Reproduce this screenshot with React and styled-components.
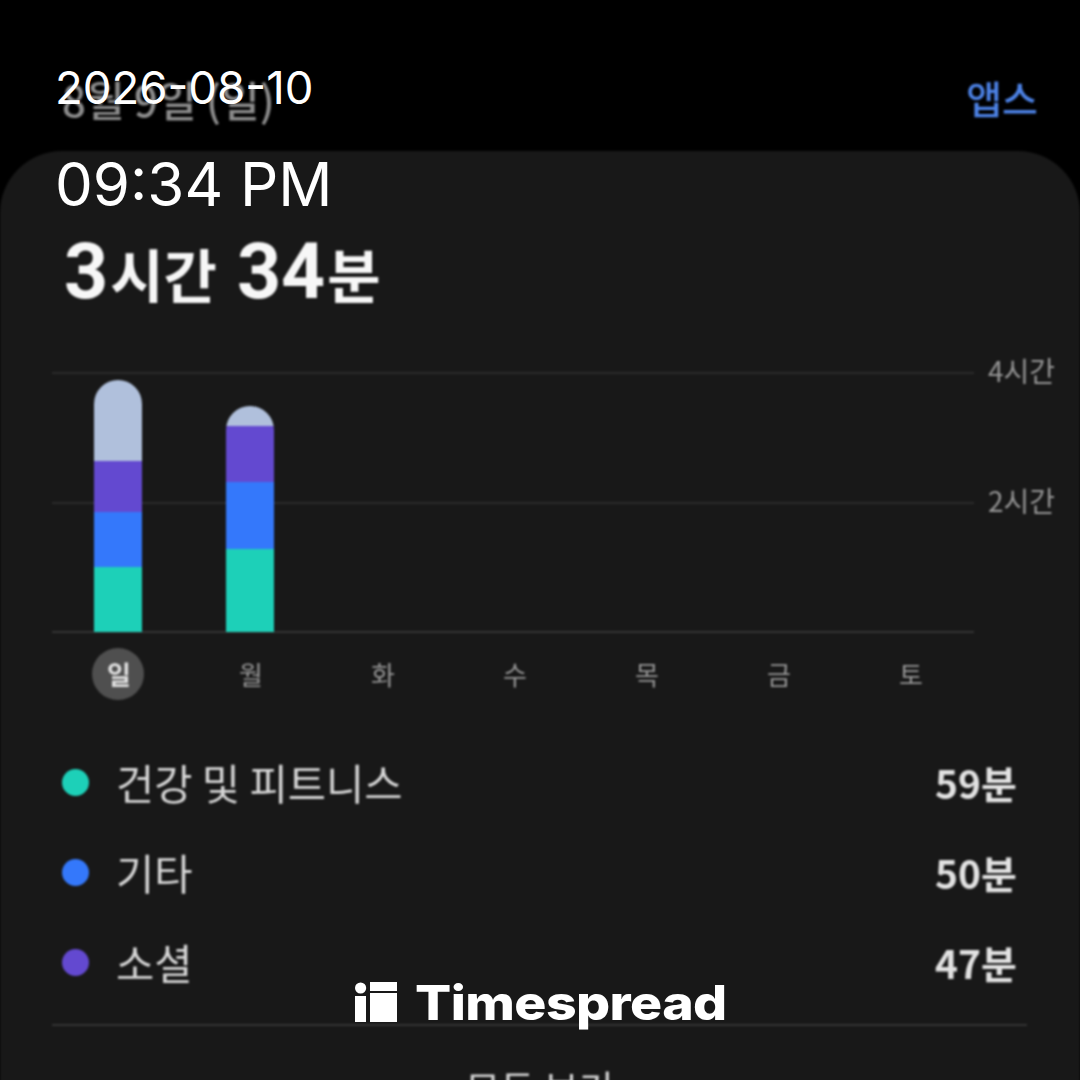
import styled, { createGlobalStyle } from 'styled-components';

const GlobalStyle = createGlobalStyle`
  html, body {
    margin: 0;
    padding: 0;
    background: #000000;
  }
`;

const KOREAN = `"Noto Sans CJK KR", "Noto Sans", sans-serif`;
const LATIN = `Inter, "Liberation Sans", sans-serif`;

const Page = styled.div`
  position: relative;
  width: 1080px;
  height: 1080px;
  overflow: hidden;
  background: #000000;
  font-family: ${KOREAN};
`;

const Screen = styled.div`
  height: 100%;
  display: flex;
  flex-direction: column;
  filter: blur(0.8px);
`;

const Header = styled.header`
  height: 151px;
  flex: none;
  display: flex;
  justify-content: space-between;
  align-items: flex-start;
  padding: 0 42px 0 62px;
  box-sizing: border-box;
`;

const DateTitle = styled.h1`
  margin: 71px 0 0;
  font-size: 42px;
  line-height: 56px;
  font-weight: 500;
  color: #8c8c8c;
`;

const AppsLink = styled.a`
  margin-top: 69px;
  font-size: 39px;
  line-height: 56px;
  font-weight: 500;
  color: #4c82e6;
`;

const Card = styled.section`
  flex: 1;
  background: #181818;
  border-radius: 62px 62px 0 0;
  padding: 83px 52px 0;
`;

const Total = styled.div`
  height: 76px;
  margin-left: 12px;
  display: flex;
  align-items: baseline;
  color: #f7f7f7;
  font-weight: 700;
  font-size: 58px;
  line-height: 76px;
`;

const TotalNumber = styled.span`
  font-family: Roboto, sans-serif;
  font-size: 77px;
  margin-left: ${(props) => props.$before || 0}px;
  margin-right: 2px;
`;

const Chart = styled.div`
  display: grid;
  margin-top: 62px;
  width: 1002px;
  height: 261px;
`;

const GridLayer = styled.div`
  grid-area: 1 / 1;
  display: flex;
  flex-direction: column;
  justify-content: space-between;
`;

const GridRow = styled.div`
  height: 2px;
  display: flex;
  align-items: center;
`;

const GridLine = styled.div`
  flex: none;
  width: 922px;
  height: 2px;
  background: ${(props) => (props.$base ? '#333333' : '#2b2b2b')};
`;

const GridLabel = styled.span`
  flex: none;
  margin: -6px 0 0 14px;
  font-size: 28px;
  line-height: 2px;
  white-space: nowrap;
  color: #969696;
`;

const BarLayer = styled.div`
  grid-area: 1 / 1;
  display: grid;
  grid-template-columns: repeat(7, 132px);
  align-items: end;
  padding-bottom: 1px;
`;

const Bar = styled.div`
  justify-self: center;
  width: 48px;
  border-radius: 24px 24px 0 0;
  overflow: hidden;
  display: flex;
  flex-direction: column;
`;

const Segment = styled.div`
  height: ${(props) => props.$height}px;
  background: ${(props) => props.$color};
`;

const Days = styled.div`
  display: grid;
  grid-template-columns: repeat(7, 132px);
  margin-top: 15px;
`;

const Day = styled.div`
  justify-self: center;
  width: 52px;
  height: 52px;
  padding: 0 0 2px 2px;
  box-sizing: border-box;
  border-radius: 50%;
  display: flex;
  align-items: center;
  justify-content: center;
  font-size: 26px;
  font-weight: ${(props) => (props.$active ? 700 : 400)};
  color: ${(props) => (props.$active ? '#e0e0e0' : '#969696')};
  background: ${(props) => (props.$active ? '#4f4f4f' : 'transparent')};
`;

const Legend = styled.ul`
  list-style: none;
  margin: 37px 0 0;
  padding: 0;
`;

const LegendRow = styled.li`
  height: 90px;
  display: flex;
  align-items: center;
  padding: 0 11px 0 10px;
`;

const Dot = styled.span`
  width: 27px;
  height: 27px;
  border-radius: 50%;
  background: ${(props) => props.$color};
`;

const LegendName = styled.span`
  flex: 1;
  margin-left: 27px;
  font-size: 41.6px;
  font-weight: 400;
  color: #d6d6d6;
`;

const LegendValue = styled.span`
  font-size: 39px;
  font-weight: 700;
  color: #e2e2e2;
`;

const Divider = styled.div`
  height: 2px;
  width: 975px;
  margin-top: 17px;
  background: #333333;
`;

const ShowAll = styled.div`
  margin-top: 36px;
  width: 975px;
  text-align: center;
  font-size: 38px;
  line-height: 50px;
  color: #d6d6d6;
`;

const Stamp = styled.div`
  position: absolute;
  top: 60px;
  left: 55px;
  font-family: ${LATIN};
  color: #ffffff;
`;

const StampDate = styled.div`
  font-size: 45.5px;
  line-height: 56px;
`;

const StampTime = styled.div`
  margin-top: 32px;
  font-size: 60px;
  line-height: 72px;
`;

const Brand = styled.div`
  position: absolute;
  top: 972px;
  left: 355px;
  display: flex;
  align-items: center;
  gap: 18px;
  height: 60px;
  color: #ffffff;
`;

const BrandName = styled.span`
  font-family: ${LATIN};
  font-size: 48px;
  font-weight: 800;
  letter-spacing: -0.5px;
  transform: scaleX(1.115);
  transform-origin: left center;
`;

const days = ['일', '월', '화', '수', '목', '금', '토'];

const bars = [
  [
    { color: '#b0c0dc', height: 81 },
    { color: '#6349d0', height: 51 },
    { color: '#3478fb', height: 55 },
    { color: '#1dd0b8', height: 65 },
  ],
  [
    { color: '#b0c0dc', height: 20 },
    { color: '#6349d0', height: 56 },
    { color: '#3478fb', height: 67 },
    { color: '#1dd0b8', height: 83 },
  ],
];

const legend = [
  { name: '건강 및 피트니스', value: '59분', color: '#1dd0b8' },
  { name: '기타', value: '50분', color: '#3478fb' },
  { name: '소셜', value: '47분', color: '#6349d0' },
];

const BrandIcon = () => (
  <svg width="42" height="40" viewBox="0 0 42 40" fill="#ffffff">
    <circle cx="5.6" cy="6" r="5.6" />
    <rect x="0" y="14" width="11" height="26" />
    <rect x="15" y="0" width="27" height="9" />
    <rect x="15" y="11" width="27" height="29" />
  </svg>
);

const App = () => (
  <Page>
    <GlobalStyle />
    <Screen>
      <Header>
        <DateTitle>8월 9일 (일)</DateTitle>
        <AppsLink>앱스</AppsLink>
      </Header>
      <Card>
        <Total>
          <TotalNumber>3</TotalNumber>시간
          <TotalNumber $before={20}>34</TotalNumber>분
        </Total>
        <Chart>
          <GridLayer>
            <GridRow>
              <GridLine />
              <GridLabel>4시간</GridLabel>
            </GridRow>
            <GridRow>
              <GridLine />
              <GridLabel>2시간</GridLabel>
            </GridRow>
            <GridRow>
              <GridLine $base />
            </GridRow>
          </GridLayer>
          <BarLayer>
            {bars.map((segments, index) => (
              <Bar key={index}>
                {segments.map((segment) => (
                  <Segment key={segment.color} $color={segment.color} $height={segment.height} />
                ))}
              </Bar>
            ))}
          </BarLayer>
        </Chart>
        <Days>
          {days.map((day, index) => (
            <Day key={day} $active={index === 0}>{day}</Day>
          ))}
        </Days>
        <Legend>
          {legend.map((item) => (
            <LegendRow key={item.name}>
              <Dot $color={item.color} />
              <LegendName>{item.name}</LegendName>
              <LegendValue>{item.value}</LegendValue>
            </LegendRow>
          ))}
        </Legend>
        <Divider />
        <ShowAll>모두 보기</ShowAll>
      </Card>
    </Screen>
    <Stamp>
      <StampDate>2026-08-10</StampDate>
      <StampTime>09:34 PM</StampTime>
    </Stamp>
    <Brand>
      <BrandIcon />
      <BrandName>Timespread</BrandName>
    </Brand>
  </Page>
);

export default App;
